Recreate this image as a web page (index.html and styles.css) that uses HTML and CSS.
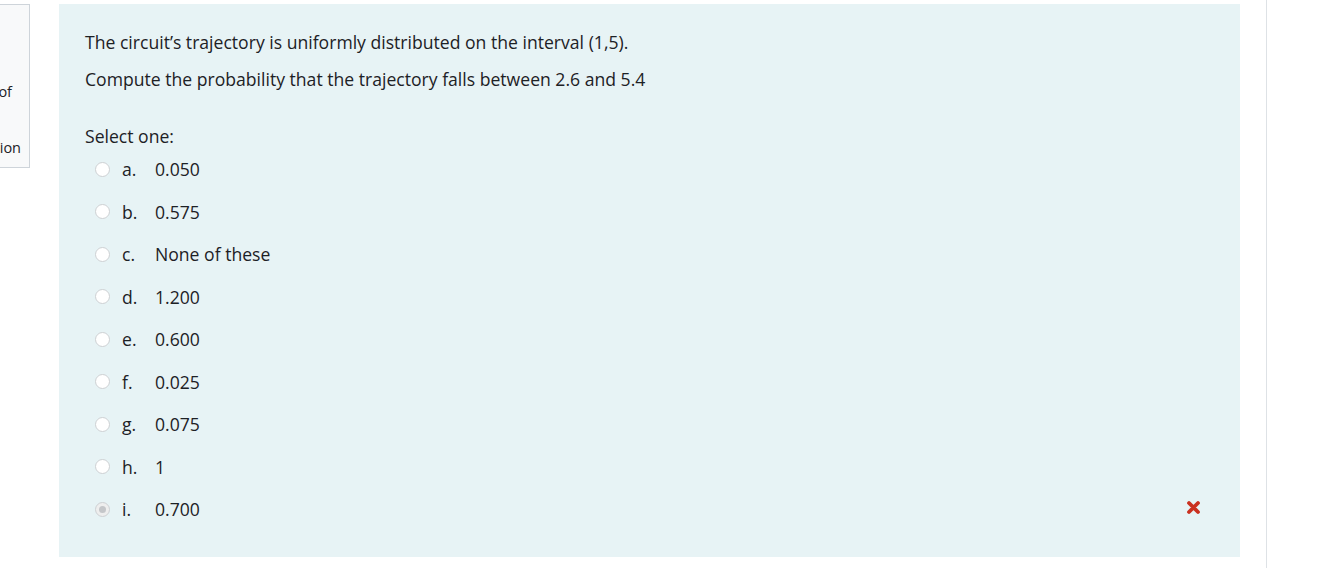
FILE: index.html
```html
<!DOCTYPE html>
<html>
<head>
<meta charset="utf-8">
<link rel="stylesheet" href="styles.css">
</head>
<body>
<div class="page">
  <div class="info">
    <div class="info-line l1">out of</div>
    <div class="info-line l2">Flag question</div>
  </div>
  <div class="formulation">
    <div class="qtext">
      <p>The circuit’s trajectory is uniformly distributed on the interval (1,5).</p>
      <p>Compute the probability that the trajectory falls between 2.6 and 5.4</p>
    </div>
    <div class="prompt">Select one:</div>
    <div class="answers">
      <div class="opt"><span class="radio"></span><span class="letter">a.</span><span class="val">0.050</span></div>
      <div class="opt"><span class="radio"></span><span class="letter">b.</span><span class="val">0.575</span></div>
      <div class="opt"><span class="radio"></span><span class="letter">c.</span><span class="val">None of these</span></div>
      <div class="opt"><span class="radio"></span><span class="letter">d.</span><span class="val">1.200</span></div>
      <div class="opt"><span class="radio"></span><span class="letter">e.</span><span class="val">0.600</span></div>
      <div class="opt"><span class="radio"></span><span class="letter">f.</span><span class="val">0.025</span></div>
      <div class="opt"><span class="radio"></span><span class="letter">g.</span><span class="val">0.075</span></div>
      <div class="opt"><span class="radio"></span><span class="letter">h.</span><span class="val">1</span></div>
      <div class="opt checked"><span class="radio"></span><span class="letter">i.</span><span class="val">0.700</span>
        <svg class="wrong" width="15" height="15" viewBox="0 0 15 15"><path d="M3 3 L12 12 M12 3 L3 12" stroke="#ca3120" stroke-width="3.8" stroke-linecap="round"/></svg>
      </div>
    </div>
  </div>
  <div class="rightcol"></div>
</div>
</body>
</html>
```

FILE: styles.css
```css
html, body {
  margin: 0;
  padding: 0;
  background: #fff;
}
body {
  font-family: "Open Sans", "Liberation Sans", sans-serif;
  font-size: 17.6px;
  color: #1d2125;
  width: 1334px;
  height: 568px;
  overflow: hidden;
}
.page {
  display: flex;
  align-items: flex-start;
  height: 568px;
}
.info {
  width: 30px;
  height: 164px;
  margin-top: 4px;
  box-sizing: border-box;
  background: #f8f9fa;
  border: 1px solid #ced4da;
  border-left: none;
  overflow: hidden;
  position: relative;
}
.info-line {
  white-space: nowrap;
  font-size: 14.5px;
  direction: rtl;
  text-align: left;
  line-height: 20px;
}
.info-line.l1 {
  margin-top: 77px;
  margin-right: 17px;
}
.info-line.l2 {
  margin-top: 36px;
  margin-right: 8px;
}
.formulation {
  width: 1181px;
  height: 553px;
  margin-left: 29px;
  margin-top: 4px;
  background: #e7f3f5;
  box-sizing: border-box;
  padding: 26px 26px 0 26px;
}
.qtext p {
  margin: 0 0 13px 0;
  line-height: 24px;
}
.prompt {
  margin-top: 33px;
  line-height: 24px;
}
.answers {
  margin-top: 9px;
}
.opt {
  display: flex;
  align-items: center;
  height: 24px;
  margin-bottom: 18.5px;
  position: relative;
}
.radio {
  width: 15px;
  height: 15px;
  box-sizing: border-box;
  border: 1px solid #cdd0d3;
  border-radius: 50%;
  background: #fff;
  margin-left: 10px;
  margin-right: 12px;
  position: relative;
}
.checked .radio {
  background: #eeeeee;
}
.checked .radio::after {
  content: "";
  position: absolute;
  left: 3px;
  top: 3px;
  width: 7px;
  height: 7px;
  border-radius: 50%;
  background: #c4c6c9;
}
.letter {
  width: 33px;
}
.wrong {
  position: absolute;
  left: 1101px;
  top: 3px;
}
.rightcol {
  margin-left: 26px;
  width: 1px;
  height: 568px;
  background: #dee2e6;
}
```
